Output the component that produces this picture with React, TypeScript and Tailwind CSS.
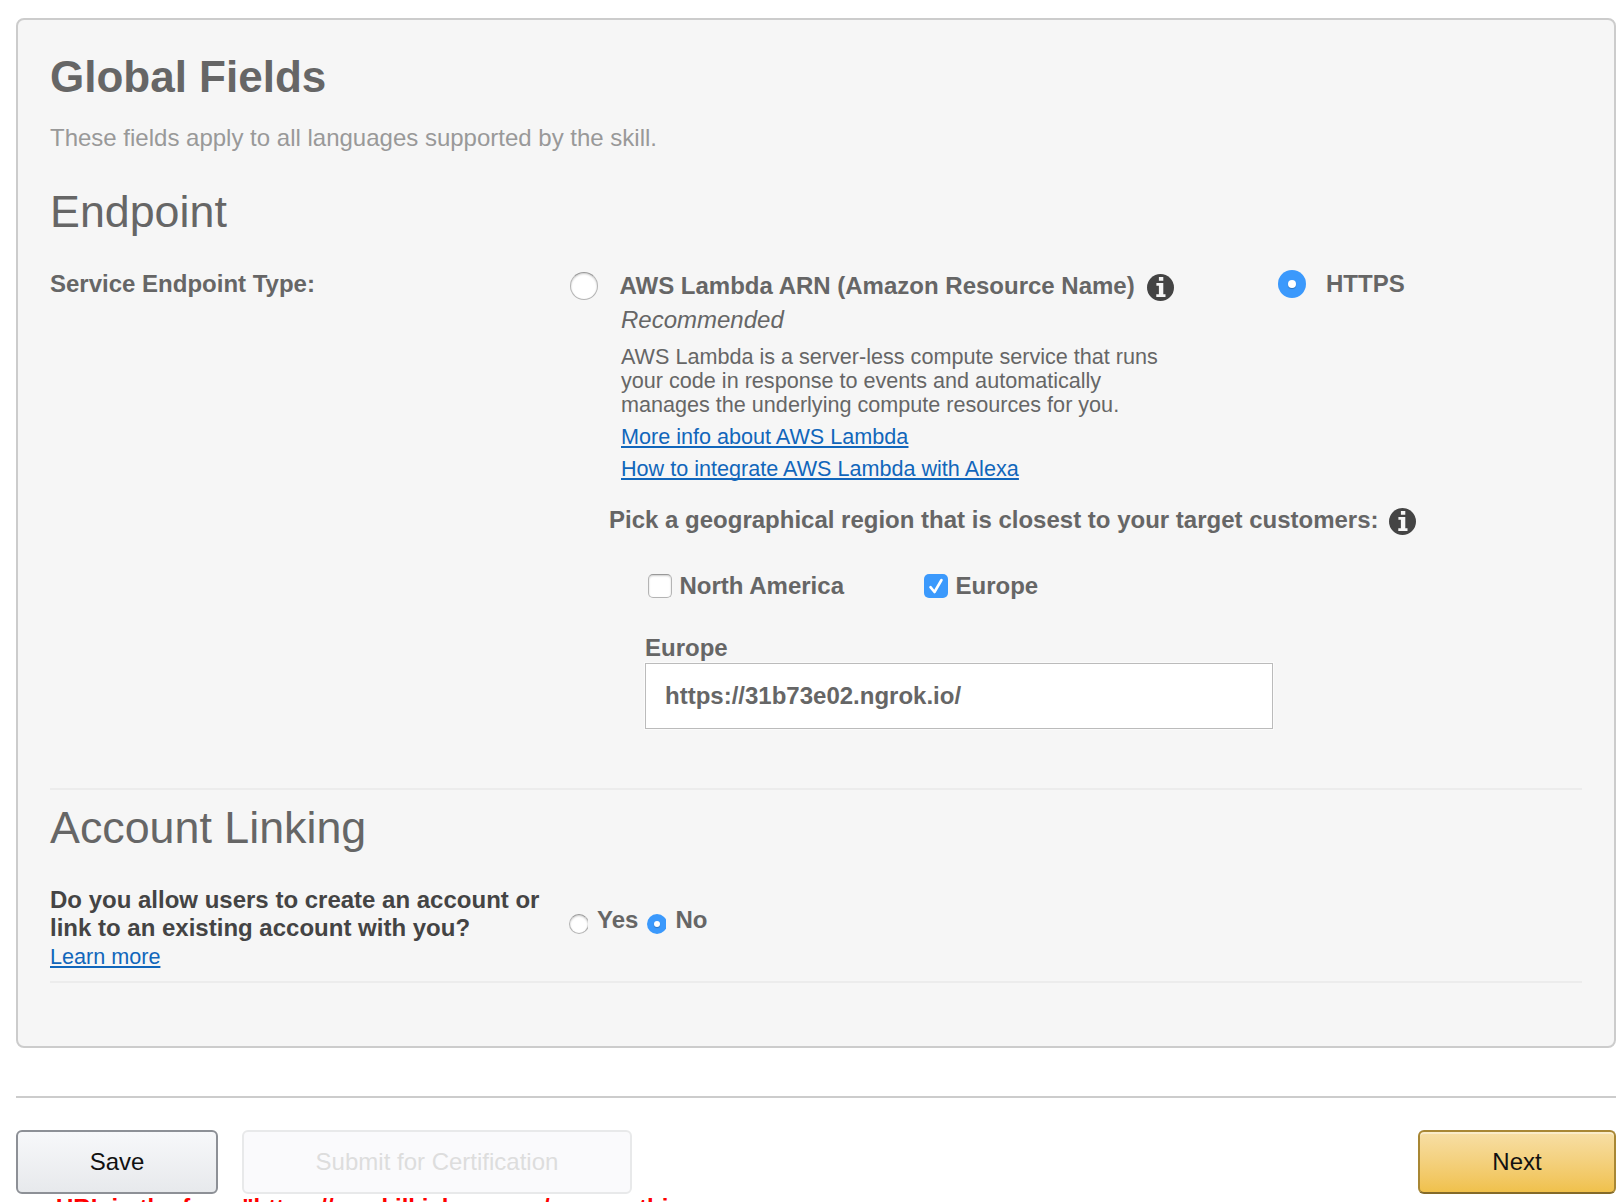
import React from "react";

function InfoIcon() {
  return (
    <svg className="block size-[27px] shrink-0" viewBox="0 0 27 27">
      <circle cx="13.5" cy="13.5" r="13.5" fill="#444" />
      <path fill="#f6f6f6" d="M11.9 2.9h4.4v3.8h-4.4zM9.4 8.9h6.9v11.3h2.2v2.8H9.3v-2.8h2.6v-8.5H9.4z" />
    </svg>
  );
}

function Radio({ on, small }: { on?: boolean; small?: boolean }) {
  const size = small ? "size-5" : "size-7";
  const dot = small ? "size-1.5" : "size-2";
  return on ? (
    <span className={`${size} flex shrink-0 items-center justify-center rounded-full bg-[#3b99fc]`}>
      <span className={`${dot} rounded-full bg-white shadow-[0_1px_1px_rgba(0,0,0,0.25)]`} />
    </span>
  ) : (
    <span className={`${size} block shrink-0 rounded-full border border-[#b4b4b4] border-t-[#999] bg-white shadow-[inset_0_1px_2px_rgba(0,0,0,0.2)]`} />
  );
}

export default function App() {
  return (
    <div className="h-[1202px] w-[1624px] overflow-hidden bg-white pl-4 pr-2 pt-[18px] font-['Liberation_Sans',sans-serif] text-2xl leading-7 text-[#666]">
      <section className="h-[1030px] rounded-lg border-2 border-[#ccc] bg-[#f6f6f6] px-8">
        <h1 className="mt-[31px] text-[44px] font-bold leading-[52px]"><span>Global Fields</span></h1>
        <p className="mt-[21px] text-[#999]"><span>These fields apply to all languages supported by the skill.</span></p>
        <h2 className="mt-[33px] text-[44.8px] leading-[52px]"><span>Endpoint</span></h2>

        <div className="mt-[33px] flex">
          <div className="w-[520px] shrink-0 font-bold"><span>Service Endpoint Type:</span></div>
          <div>
            <div className="flex">
              <div className="flex w-[708px] pt-[2px]">
                <Radio />
                <div className="pl-[21.5px]">
                  <div className="flex h-[30px] gap-[12px] font-bold">
                    <span>AWS Lambda ARN (Amazon Resource Name)</span>
                    <span className="pt-[2px]"><InfoIcon /></span>
                  </div>
                  <div className="mt-1 pl-[1.5px] italic"><span>Recommended</span></div>
                  <p className="mt-[11px] pl-[1.5px] text-[21.6px] leading-6">
                    <span>AWS Lambda is a server-less compute service that runs</span><br />
                    <span>your code in response to events and automatically</span><br />
                    <span>manages the underlying compute resources for you.</span>
                  </p>
                  <div className="mt-1 pl-[1.5px] text-[21.6px] leading-8 text-[#1166bb] underline decoration-2 underline-offset-2 [text-decoration-skip-ink:none]">
                    <a className="block">More info about AWS Lambda</a>
                    <a className="block">How to integrate AWS Lambda with Alexa</a>
                  </div>
                </div>
              </div>
              <Radio on />
              <span className="pl-5 font-bold">HTTPS</span>
            </div>
            <div className="mt-[21px] flex gap-[10px] pl-[39px] font-bold">
              <span>Pick a geographical region that is closest to your target customers:</span>
              <span className="pt-[2px]"><InfoIcon /></span>
            </div>
            <div className="mt-[37px] flex pl-[78px] font-bold">
              <div className="flex w-[276px] items-center gap-[7.5px]">
                <span className="size-6 rounded-[5px] border border-[#b4b4b4] border-t-[#999] bg-white shadow-[inset_0_1px_2px_rgba(0,0,0,0.2)]" />
                <span>North America</span>
              </div>
              <div className="flex items-center gap-[7.5px]">
                <span className="size-6 rounded-[5px] bg-[#3b99fc]">
                  <svg viewBox="0 0 24 24" className="size-6" fill="none" stroke="#fff" strokeWidth="2.6" strokeLinecap="round" strokeLinejoin="round"><path d="M6.5 13.2l4 4.8 7-12" /></svg>
                </span>
                <span>Europe</span>
              </div>
            </div>
            <div className="mt-[34px] pl-[75px] font-bold">
              <div><span>Europe</span></div>
              <div className="mt-px flex h-[66px] w-[628px] items-center border border-[#bbb] bg-white pl-[19px] shadow-[0_0_0_1px_rgba(255,255,255,0.6)]"><span>https://31b73e02.ngrok.io/</span></div>
            </div>
          </div>
        </div>

        <hr className="mt-[59px] border-t-2 border-[#ececec]" />
        <h2 className="mt-[11px] text-[44.8px] leading-[52px]"><span>Account Linking</span></h2>
        <div className="mt-[33px] flex">
          <div className="w-[519px] shrink-0">
            <div className="font-bold text-[#444]">
              <span>Do you allow users to create an account or</span><br />
              <span>link to an existing account with you?</span>
            </div>
            <div><a className="text-[21.6px] text-[#1166bb] underline decoration-2 underline-offset-2">Learn more</a></div>
          </div>
          <div className="flex pt-5 font-bold">
            <span className="mt-2 h-5 w-[19px] overflow-hidden"><Radio small /></span>
            <span className="pl-[9px] pr-[9px]">Yes</span>
            <span className="mt-2 h-5 w-[19px] overflow-hidden"><Radio small on /></span>
            <span className="pl-[9px]">No</span>
          </div>
        </div>
        <hr className="mt-[10px] border-t-2 border-[#ececec]" />
      </section>

      <hr className="mt-12 border-t-2 border-[#ccc]" />
      <div className="mt-8 flex text-[#111]">
        <button className="h-16 w-[202px] rounded-md border-2 border-[#8d9096] bg-gradient-to-b from-[#f7f8fa] to-[#e7e9ec]"><span>Save</span></button>
        <button className="ml-6 h-16 w-[390px] rounded-md border-2 border-[#e8e9ea] bg-[#fafafc] text-[#ddd]"><span>Submit for Certification</span></button>
        <button className="ml-auto h-16 w-[198px] rounded-md border-2 border-[#a88734] border-b-[#846a29] bg-gradient-to-b from-[#f7dfa5] to-[#f0c14b] shadow-[inset_0_2px_0_rgba(255,255,255,0.4)]"><span>Next</span></button>
      </div>
      <div className="ml-10 whitespace-nowrap font-bold text-[#f00]"><span>URL in the form "https://myskill.icherr.com/acsomethi</span></div>
    </div>
  );
}
